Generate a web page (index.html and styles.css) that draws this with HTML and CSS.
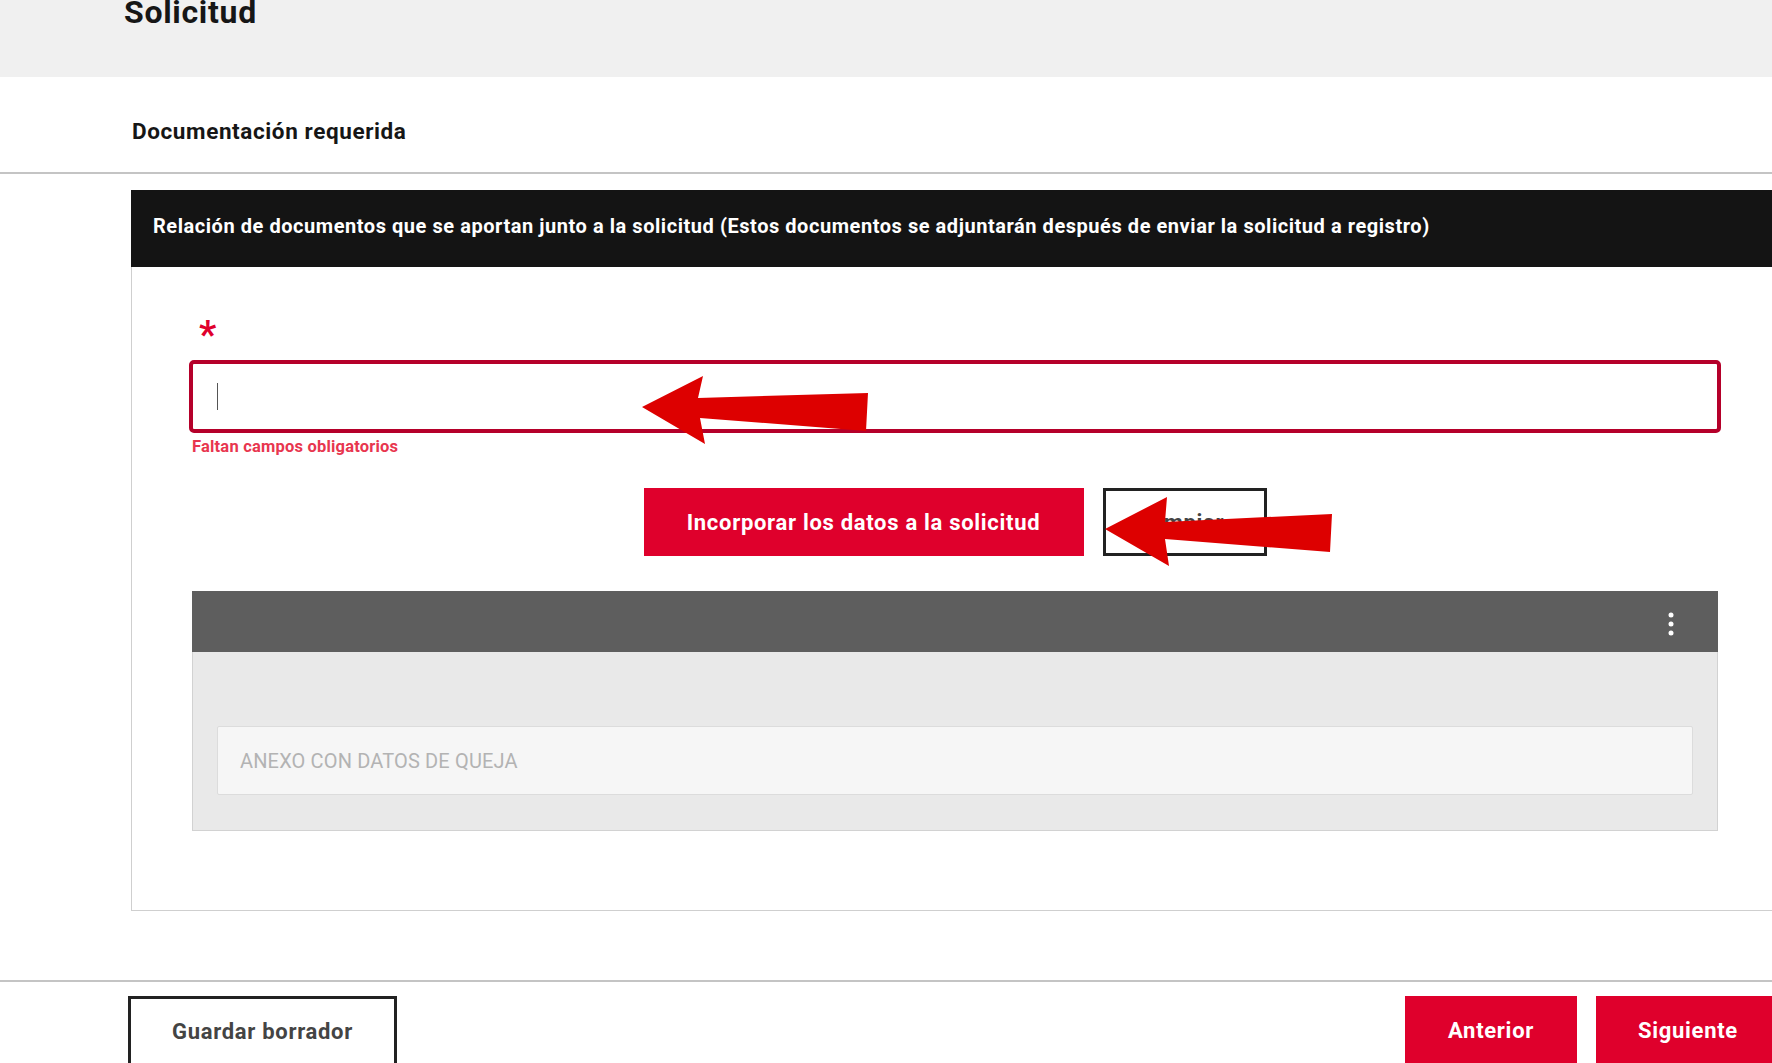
FILE: index.html
```html
<!DOCTYPE html>
<html lang="es">
<head>
    <meta charset="UTF-8">
    <meta name="viewport" content="width=device-width, initial-scale=1.0">
    <title>Solicitud</title>
    <link rel="stylesheet" href="styles.css">
</head>
<body>
    <header class="page-head">
        <h1 class="page-title">Solicitud</h1>
    </header>

    <div class="section-head">
        <h2 class="section-title">Documentación requerida</h2>
    </div>

    <div class="panel">
        <div class="panel-bar">Relación de documentos que se aportan junto a la solicitud (Estos documentos se adjuntarán después de enviar la solicitud a registro)</div>
        <div class="panel-body">
            <span class="req">*</span>
            <div class="field error"><span class="caret"></span></div>
            <p class="field-msg">Faltan campos obligatorios</p>

            <div class="actions">
                <button class="btn btn-red btn-add">Incorporar los datos a la solicitud</button>
                <button class="btn btn-outline btn-clear">Limpiar</button>
            </div>

            <div class="grid">
                <div class="grid-head">
                    <svg class="kebab" width="6" height="24" viewBox="0 0 6 24">
                        <circle cx="3" cy="3" r="2.5" fill="#fff"/>
                        <circle cx="3" cy="12" r="2.5" fill="#fff"/>
                        <circle cx="3" cy="21" r="2.5" fill="#fff"/>
                    </svg>
                </div>
                <div class="grid-body">
                    <div class="grid-item">ANEXO CON DATOS DE QUEJA</div>
                </div>
            </div>
        </div>
    </div>

    <footer class="steps">
        <button class="btn btn-outline btn-draft">Guardar borrador</button>
        <div class="steps-nav">
            <button class="btn btn-red btn-prev">Anterior</button>
            <button class="btn btn-red btn-next">Siguiente</button>
        </div>
    </footer>

    <!-- annotation arrows drawn over the screenshot -->
    <svg class="marks" width="1772" height="1063" viewBox="0 0 1772 1063">
        <polygon points="642,407 703,376 698,398 868,393 866,431 700,418 705,444" fill="#dd0000"/>
        <polygon points="1105,529 1167,497 1165,522 1332,514 1330,552 1165,539 1169,566" fill="#dd0000"/>
    </svg>
</body>
</html>
```

FILE: styles.css
```css
body {
    margin: 0;
    font-family: Roboto, "Liberation Sans", sans-serif;
    color: #161616;
    background-color: #fff;
    position: relative;
    overflow: hidden;
    height: 1063px;
}

button {
    font-family: Roboto, "Liberation Sans", sans-serif;
}

.page-head {
    display: flow-root;
    background-color: #f0f0f0;
    height: 77px;
    padding-left: 124px;
}

.page-title {
    margin: -4px 0 0 0;
    font-size: 32px;
    line-height: 32px;
    letter-spacing: 0.7px;
    font-weight: 700;
}

.section-head {
    box-sizing: border-box;
    height: 97px;
    border-bottom: 2px solid #c4c4c4;
    padding: 40px 0 0 132px;
}

.section-title {
    margin: 0;
    font-size: 22.5px;
    line-height: 28px;
    letter-spacing: 0.6px;
    font-weight: 700;
}

.panel {
    margin-top: 16px;
    margin-left: 131px;
    width: 1647px;
}

.panel-bar {
    box-sizing: border-box;
    background-color: #141414;
    color: #fff;
    height: 77px;
    display: flex;
    align-items: center;
    padding: 0 0 6px 22px;
    font-size: 20px;
    letter-spacing: 0.55px;
    font-weight: 700;
}

.panel-body {
    border-left: 1px solid #cfcfcf;
    border-bottom: 1px solid #cfcfcf;
    padding: 50px 57px 79px 57px;
}

.req {
    display: block;
    height: 36px;
    margin-left: 10px;
    font-size: 38px;
    line-height: 36px;
    font-weight: 700;
    color: #e0002d;
}

.field {
    margin-top: 7px;
    height: 65px;
    border: 4px solid #b5002a;
    border-radius: 5px;
    display: flex;
    align-items: center;
    padding-left: 24px;
}

.caret {
    width: 1px;
    height: 27px;
    background-color: #555;
}

.field-msg {
    margin: 4px 0 0 3px;
    font-size: 16.5px;
    line-height: 20px;
    letter-spacing: 0.2px;
    font-weight: 700;
    color: #e8364f;
}

.actions {
    margin-top: 31px;
    display: flex;
    justify-content: center;
    gap: 19px;
}

.btn {
    height: 68px;
    border: none;
    font-size: 22px;
    letter-spacing: 0.7px;
    font-weight: 700;
    padding: 0;
    cursor: pointer;
}

.btn-red {
    background-color: #df002c;
    color: #fff;
}

.btn-outline {
    background-color: #fff;
    border: 3px solid #222;
    color: #444;
}

.btn-add {
    width: 440px;
}

.btn-clear {
    width: 164px;
}

.grid {
    margin-top: 35px;
    margin-left: 3px;
    width: 1526px;
}

.grid-head {
    height: 61px;
    background-color: #5e5e5e;
    display: flex;
    align-items: center;
    justify-content: flex-end;
    padding-right: 44px;
}

.kebab {
    margin-top: 5px;
}

.grid-body {
    background-color: #e9e9e9;
    border: 1px solid #d2d2d2;
    border-top: none;
    padding: 74px 24px 35px 24px;
}

.grid-item {
    height: 67px;
    background-color: #f6f6f6;
    border: 1px solid #dcdcdc;
    border-radius: 2px;
    display: flex;
    align-items: center;
    padding-left: 22px;
    font-size: 20px;
    letter-spacing: 0.15px;
    color: #b3b3b3;
}

.steps {
    margin-top: 69px;
    border-top: 2px solid #c4c4c4;
    padding: 14px 0 0 128px;
    display: flex;
    justify-content: space-between;
    width: 1652px;
}

.steps-nav {
    display: flex;
    gap: 19px;
}

.btn-draft {
    width: 269px;
    border-bottom: none;
}

.btn-prev {
    width: 172px;
}

.btn-next {
    width: 184px;
}

.marks {
    position: absolute;
    top: 0;
    left: 0;
    pointer-events: none;
}
```
